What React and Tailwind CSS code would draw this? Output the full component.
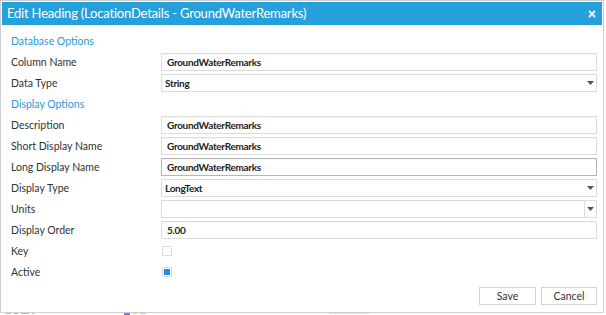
import React from "react";

const font = { fontFamily: 'Lato, "Open Sans", sans-serif' };

function Arrow() {
  return (
    <svg width="7" height="4" viewBox="0 0 7 4" className="block">
      <path d="M0 0 H7 L3.5 4 Z" fill="#555" />
    </svg>
  );
}

function Label({ children }) {
  return <div className="w-[150px] shrink-0 text-[10.5px] text-[#333] leading-none">{children}</div>;
}

function TextRow({ label, value, dark }) {
  return (
    <div className="flex items-start h-[21px]">
      <div className="h-[18px] flex items-center"><Label>{label}</Label></div>
      <div
        className={`w-[436px] h-[18px] border ${dark ? "border-[#b5b5b5]" : "border-[#dcdcdc]"} bg-white flex items-center pl-[5px] text-[10px] tracking-[-0.3px] font-bold text-[#222] shadow-[inset_0_1px_1px_rgba(0,0,0,0.04)]`}
      >
        {value}
      </div>
    </div>
  );
}

function SelectRow({ label, value, split }) {
  return (
    <div className="flex items-start h-[21px]">
      <div className="h-[18px] flex items-center"><Label>{label}</Label></div>
      <div className="w-[436px] h-[18px] border border-[#dcdcdc] bg-white flex items-center">
        <div className="flex-1 pl-[3px] text-[10px] tracking-[-0.3px] font-bold text-[#222]">{value}</div>
        {split ? (
          <div className="h-full w-[12px] border-l border-[#dcdcdc] flex items-center justify-center">
            <Arrow />
          </div>
        ) : (
          <div className="w-[12px] flex items-center justify-center"><Arrow /></div>
        )}
      </div>
    </div>
  );
}

function CheckRow({ label, checked }) {
  return (
    <div className="flex items-start h-[21px]">
      <div className="h-[18px] flex items-center"><Label>{label}</Label></div>
      <div className="h-[18px] flex items-center pl-[1px]">
        <div className="w-[10px] h-[10px] border border-[#dcdcdc] bg-white flex items-center justify-center">
          {checked && <div className="w-[6px] h-[6px] bg-[#1e90d8]" />}
        </div>
      </div>
    </div>
  );
}

function Section({ children }) {
  return (
    <div className="h-[21px] flex items-start pt-[4px] text-[10.5px] text-[#2b9ad6] leading-none">{children}</div>
  );
}

export default function App() {
  return (
    <div className="w-[606px] h-[315px] bg-white overflow-hidden" style={font}>
      <div className="w-[604px] h-[313px] border border-[#cfcfcf] bg-white flex flex-col p-[1px]">
        <div className="h-[23px] bg-[#26a0da] flex items-center justify-between pl-[5px] pr-[6px]">
          <span className="text-[13px] tracking-[-0.2px] text-white leading-none">Edit Heading (LocationDetails - GroundWaterRemarks)</span>
          <svg width="8" height="8" viewBox="0 0 8 8">
            <path d="M1 1 L7 7 M7 1 L1 7" stroke="#e8f4fb" strokeWidth="1.8" />
          </svg>
        </div>
        <div className="pl-[9px] pt-[7px] flex flex-col">
          <Section>Database Options</Section>
          <TextRow label="Column Name" value="GroundWaterRemarks" />
          <SelectRow label="Data Type" value="String" />
          <Section>Display Options</Section>
          <TextRow label="Description" value="GroundWaterRemarks" />
          <TextRow label="Short Display Name" value="GroundWaterRemarks" />
          <TextRow label="Long Display Name" value="GroundWaterRemarks" dark />
          <SelectRow label="Display Type" value="LongText" />
          <SelectRow label="Units" value="" split />
          <TextRow label="Display Order" value="5.00" />
          <CheckRow label="Key" />
          <CheckRow label="Active" checked />
          <div className="flex justify-end gap-[5px] pr-[5px] mt-[3px]">
            <button className="w-[57px] h-[18px] border border-[#d4d4d4] bg-white text-[10.5px] text-[#333] leading-none">Save</button>
            <button className="w-[56px] h-[18px] border border-[#d4d4d4] bg-white text-[10.5px] text-[#333] leading-none">Cancel</button>
          </div>
        </div>
      </div>
      <div className="flex items-start h-[2px] pl-[6px] gap-[3px]">
        <div className="w-[5px] h-[1px] bg-[#bbb]" />
        <div className="w-[4px] h-[1px] bg-[#bbb]" />
        <div className="w-[8px] h-[1px] bg-[#bbb]" />
        <div className="w-[2px] h-[1px] bg-[#bbb] mr-[87px]" />
        <div className="w-[6px] h-[2px] bg-[#7a7ae0]" />
        <div className="w-[4px] h-[1px] bg-[#ccc]" />
        <div className="w-[6px] h-[1px] bg-[#ccc] mr-[180px]" />
        <div className="w-[40px] h-[1px] bg-[#ddd]" />
      </div>
    </div>
  );
}
